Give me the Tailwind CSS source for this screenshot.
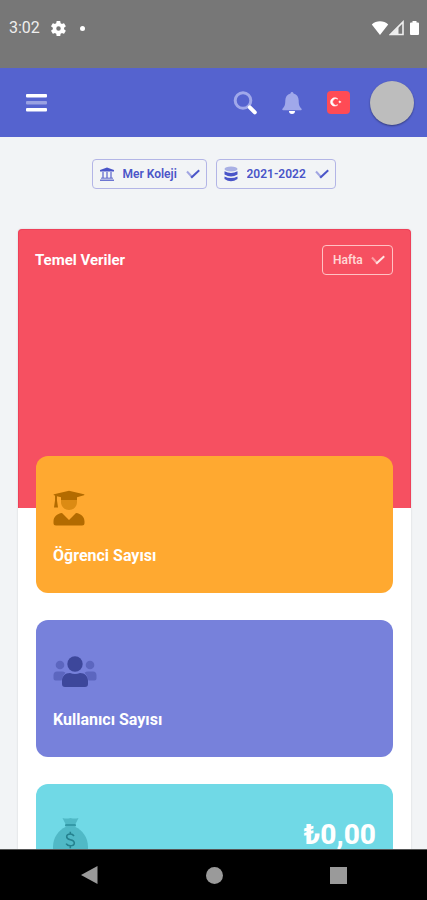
<!DOCTYPE html>
<html lang="tr">
<head>
<meta charset="utf-8">
<meta name="viewport" content="width=device-width, initial-scale=1">
<title>Mer Koleji</title>
<script src="https://cdn.jsdelivr.net/npm/@tailwindcss/browser@4"></script>
</head>
<body class="flex h-screen flex-col overflow-hidden bg-[#f2f4f6] font-['Roboto',sans-serif]">

  <!-- Status bar -->
  <div class="flex h-[68px] shrink-0 items-start justify-between bg-[#777777] pt-[18px] pr-[7px] pl-[9px] text-white">
    <div class="flex h-5 items-center">
      <span class="text-base leading-5 text-[#eeeeee]">3:02</span>
      <svg class="ml-[11px] size-[15px]" viewBox="2 2 20 20" fill="currentColor" aria-hidden="true"><path d="M19.4 13a7.500 7.500 0 0 0 0-2l2.100-1.600a.5.5 0 0 0 .1-.6l-2-3.500a.5.5 0 0 0-.6-.2l-2.500 1a7 7 0 0 0-1.700-1l-.4-2.700a.5.5 0 0 0-.5-.4h-4a.5.5 0 0 0-.5.4L9 5.100a7 7 0 0 0-1.700 1l-2.500-1a.5.5 0 0 0-.6.2l-2 3.500a.5.5 0 0 0 .1.600L4.500 11a7.500 7.500 0 0 0 0 2l-2.200 1.600a.5.5 0 0 0-.1.6l2 3.500c.1.200.4.300.6.200l2.500-1a7 7 0 0 0 1.700 1l.4 2.700c0 .2.200.4.500.4h4c.3 0 .5-.2.500-.4l.4-2.700a7 7 0 0 0 1.700-1l2.500 1c.2.100.5 0 .6-.2l2-3.500a.5.5 0 0 0-.1-.6zM12 15a3 3 0 1 1 0-6 3 3 0 0 1 0 6z"/></svg>
      <span class="ml-[14px] size-[5px] rounded-full bg-white"></span>
    </div>
    <div class="flex h-5 items-center">
      <svg class="h-4 w-[18px]" viewBox="0 0 18 16" fill="currentColor" aria-hidden="true"><path d="M.8 4.500C5 .2 13 .2 17.200 4.500L9 15z"/></svg>
      <svg class="h-4 w-[15px]" viewBox="0 0 15 16" aria-hidden="true"><path d="M14 2v12.500H1.500z" fill="none" stroke="#eeeeee" stroke-width="1.600"/><path d="M9.500 7v7H2.500z" fill="#eeeeee"/></svg>
      <svg class="ml-[5px] h-4 w-[11px]" viewBox="0 0 11 16" fill="currentColor" aria-hidden="true"><path d="M3.500 1h4v1.500H9q1 0 1 1V14q0 1-1 1H2q-1 0-1-1V3.500q0-1 1-1h1.500z"/></svg>
    </div>
  </div>

  <!-- App header -->
  <header class="flex h-[69px] shrink-0 items-center justify-between bg-[#5563cf] pr-[13px] pl-6">
    <button type="button" aria-label="Menü" class="flex size-6 items-center justify-center">
      <svg class="h-5 w-6" viewBox="0 0 24 20" fill="#ffffff" aria-hidden="true"><rect x="2" y="1" width="21" height="3.500" rx="1"/><rect x="2" y="8" width="21" height="3.500" rx="1" opacity=".4"/><rect x="2" y="15" width="21" height="3.500" rx="1"/></svg>
    </button>
    <div class="flex items-center">
      <button type="button" aria-label="Ara" class="size-6">
        <svg class="size-6" viewBox="0 0 24 24" fill="none" aria-hidden="true"><circle cx="10" cy="9.500" r="7.800" stroke="#a0a8ea" stroke-width="3"/><path d="M16.800 16.300l5 5" stroke="#ffffff" stroke-width="4" stroke-linecap="round"/></svg>
      </button>
      <button type="button" aria-label="Bildirimler" class="ml-[23px] size-6">
        <svg class="size-6" viewBox="0 0 24 24" aria-hidden="true"><path d="M12 1c.8 0 1.300.6 1.500 1.400C17 3.400 18.700 6 18.700 9.500c0 4.700 1 6.300 2.800 8.300.5.700.2 1.400-.6 1.400H3.100c-.8 0-1.100-.7-.6-1.400 1.800-2 2.800-3.600 2.800-8.300 0-3.500 1.700-6.100 5.200-7.100C10.700 1.600 11.200 1 12 1z" fill="#a0a8ea"/><path d="M9 20h6a3 3 0 0 1-6 0z" fill="#ffffff"/></svg>
      </button>
      <button type="button" aria-label="Türkçe" class="ml-[23px] h-[23px] w-[23px]">
        <svg class="h-[23px] w-[23px]" viewBox="0 0 23 23" aria-hidden="true"><rect width="23" height="23" rx="4" fill="#ff4b55"/><path d="M10.800 13.800a4.200 4.200 0 1 1 0-5.800 3.400 3.400 0 1 0 0 5.800z" fill="#ffffff" stroke="#ffffff" stroke-width=".6"/><path d="M10.800 10.900l1.400-.4.100-1.300.8 1.100 1.300-.4-.8 1 .8 1.100-1.300-.4-.8 1-.1-1.300z" fill="#ffffff"/></svg>
      </button>
      <button type="button" aria-label="Profil" class="ml-5 size-11 rounded-full bg-[#bdbdbd] shadow-[0_1px_2px_rgba(0,0,0,0.4)]"></button>
    </div>
  </header>

  <main class="min-h-0 flex-1 overflow-hidden">
    <div class="flex justify-center gap-[9px] pt-[22px] pb-10">
      <label class="flex h-[30px] items-center rounded-[4px] border border-[#b3b5e6] px-[6px] text-[#4a55c8]">
        <svg class="size-4" viewBox="0 0 16 16" fill="currentColor" aria-hidden="true"><path d="M8 1.500L15 4v1.500H1V4z"/><g opacity=".55"><rect x="3" y="6" width="2" height="6"/><rect x="7" y="6" width="2" height="6"/><rect x="11" y="6" width="2" height="6"/></g><rect x="2" y="11.500" width="12" height="1.500" opacity=".6"/><rect x="1" y="13.500" width="14" height="1.500" opacity=".8"/></svg>
        <select aria-label="Okul" class="ml-2 appearance-none bg-transparent text-xs leading-4 font-semibold outline-none"><option>Mer Koleji</option></select>
        <svg class="ml-2 h-3 w-[14px]" viewBox="0 0 14 12" fill="none" aria-hidden="true"><path d="M1 3.500l5 5.500" stroke="#a2a6e2" stroke-width="2"/><path d="M5.200 9.800l8-7.600" stroke="currentColor" stroke-width="2"/></svg>
      </label>
      <label class="flex h-[30px] items-center rounded-[4px] border border-[#b3b5e6] px-[6px] text-[#4a55c8]">
        <svg class="size-4" viewBox="0 0 16 16" aria-hidden="true"><ellipse cx="8" cy="3" rx="6.500" ry="2.500" fill="#a9b0e4"/><path d="M1.500 5.300q6.500 3.200 13 0v3.200q-6.500 3.800-13 0zM1.500 10.500q6.500 3.200 13 0V13q-6.500 4.500-13 0z" fill="currentColor"/></svg>
        <select aria-label="Dönem" class="ml-2 appearance-none bg-transparent text-xs leading-4 font-semibold outline-none"><option>2021-2022</option></select>
        <svg class="ml-2 h-3 w-[14px]" viewBox="0 0 14 12" fill="none" aria-hidden="true"><path d="M1 3.500l5 5.500" stroke="#a2a6e2" stroke-width="2"/><path d="M5.200 9.800l8-7.600" stroke="currentColor" stroke-width="2"/></svg>
      </label>
    </div>

    <section class="mr-4 ml-[18px] rounded-[4px] bg-white shadow-[0_0_2px_rgba(0,0,0,0.15)]">
      <div class="flex h-[279px] items-start justify-between rounded-t-[4px] border border-b-0 border-[#ee4059] bg-[#f65061] pt-[15px] pr-[17px] pl-4 text-white">
        <h1 class="text-[15px] leading-[30px] font-bold">Temel Veriler</h1>
        <label class="flex h-[30px] items-center rounded-[4px] border border-[#ffc2c4] pr-[7px] pl-[10px] text-[#ffd6d4]">
          <select aria-label="Zaman aralığı" class="appearance-none bg-transparent text-xs leading-4 font-semibold outline-none"><option>Hafta</option></select>
          <svg class="ml-2 h-3 w-[14px]" viewBox="0 0 14 12" fill="none" aria-hidden="true"><path d="M1 3.500l5 5.500" stroke="#fba0a6" stroke-width="2"/><path d="M5.200 9.800l8-7.600" stroke="#ffe6e4" stroke-width="2"/></svg>
        </label>
      </div>

      <div class="-mt-[52px] flex flex-col gap-[27px] px-[18px] pb-[18px]">
        <article class="h-[137px] rounded-xl bg-[#ffa930] px-[17px] pt-[34px] text-white">
          <svg class="h-9 w-8" viewBox="0 0 32 36" aria-hidden="true"><path d="M8 10h16v2c0 4.500-3.500 8-8 8s-8-3.500-8-8z" fill="#dc8b13"/><path d="M1 4.300L15 1q1-.3 2 0l14 3.300q1 .4 0 .9l-7 2V10H8V7.200l-4-1v4.300l1 7H1l1-7V5.500l-1-.3q-1-.5 0-.9z" fill="#b36b00"/><path d="M9 23l7 7 7-7c5 .5 8.500 4 8.500 8.500v1.500Q31.500 35.500 29 35.500H3Q.5 35.500 .5 33v-1.500C.5 27 4 23.500 9 23z" fill="#b36b00"/></svg>
          <h2 class="mt-5 text-base leading-5 font-bold">Öğrenci Sayısı</h2>
        </article>

        <article class="h-[137px] rounded-xl bg-[#7781db] px-[17px] pt-[34px] text-white">
          <svg class="h-9 w-11" viewBox="0 0 44 36" aria-hidden="true"><g fill="#5c66bf"><circle cx="7" cy="11" r="4.300"/><circle cx="37" cy="11" r="4.300"/><path d="M4 17.500h5q2 0 3.500 1.300Q9.500 21.500 8.500 26.500H2.500Q.5 26.500 .5 24.500v-3Q.5 17.500 4 17.500zM40 17.500h-5q-2 0-3.500 1.300Q34.500 21.500 35.500 26.500h6q2 0 2-2v-3q0-4-3.500-4z"/></g><g fill="#3d479b"><circle cx="22" cy="10" r="7.700"/><path d="M17 19q5 2 10 0c5 0 8 3.500 8 8v3q0 3-3 3H12q-3 0-3-3v-3c0-4.500 3-8 8-8z"/></g></svg>
          <h2 class="mt-5 text-base leading-5 font-bold">Kullanıcı Sayısı</h2>
        </article>

        <article class="flex h-[137px] items-start justify-between rounded-xl bg-[#70d9e6] px-[17px] pt-[33px] text-white">
          <svg class="h-[46px] w-[35px]" viewBox="0 0 35 46" aria-hidden="true"><path d="M9.500 1q4 1 8 0 4 1 8 0L22.500 7h-10z" fill="#50b9c6"/><rect x="12" y="7" width="11" height="2.500" rx="1" fill="#349aa8"/><path d="M12.500 10h10C29 13 35 20 35 30c0 9-3 14-8 14H8c-5 0-8-5-8-14C0 20 6 13 12.500 10z" fill="#50b9c6"/><path d="M21 19q-1.300-2-3.700-2-3.600 0-3.600 2.700 0 2.200 3.600 3 4 .8 4 3.300 0 2.800-4 2.800-2.800 0-4.200-2.200M17.300 14.800v2.200M17.300 28.800v2.500" fill="none" stroke="#25818e" stroke-width="1.600"/></svg>
          <p class="text-[28px] leading-9 font-extrabold">₺0,00</p>
        </article>
      </div>
    </section>
  </main>

  <!-- System navigation -->
  <nav class="flex h-[51px] shrink-0 items-center justify-between border-t border-[#555555] bg-black px-20 text-[#9a9a9a]">
    <button type="button" aria-label="Geri" class="flex w-[18px] justify-center"><svg class="h-5 w-[18px]" viewBox="0 0 18 20" fill="currentColor" aria-hidden="true"><path d="M17.500 1v18L1 10z"/></svg></button>
    <button type="button" aria-label="Ana ekran" class="size-[17px] rounded-full bg-current"></button>
    <button type="button" aria-label="Son uygulamalar" class="size-[17px] bg-current"></button>
  </nav>
</body>
</html>
